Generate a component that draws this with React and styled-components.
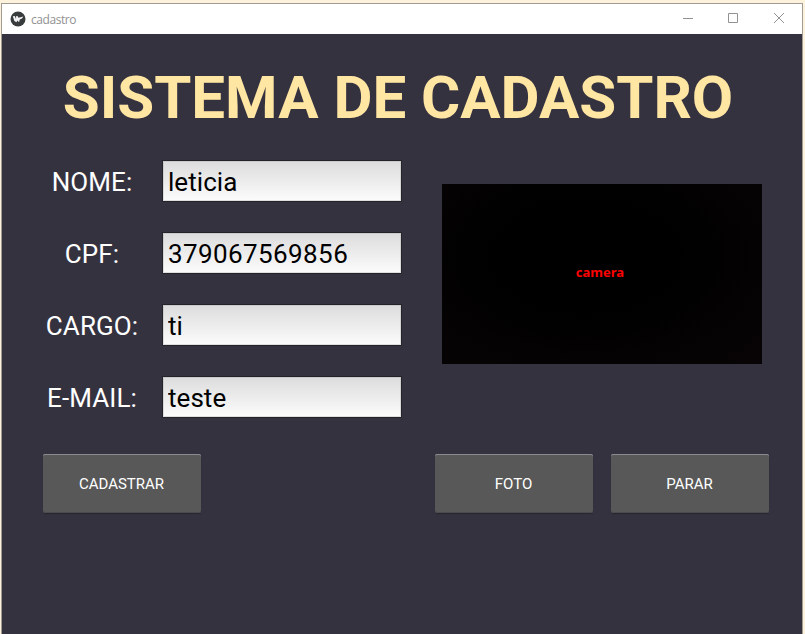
import React from "react";
import styled, { createGlobalStyle } from "styled-components";

const GlobalStyle = createGlobalStyle`
  * { box-sizing: border-box; }
  body { margin: 0; background: #fdf3dd; overflow: hidden; }
  button, input { font-family: Roboto, sans-serif; }
`;

const Desktop = styled.div`
  width: 805px;
  height: 634px;
  padding: 3px 2px 0 1px;
  overflow: hidden;
  background: #fdf3dd;
  font-family: Roboto, sans-serif;
`;

const Window = styled.main`
  height: 640px;
  border: 1px solid #a09b93;
  background: #353240;
`;

const TitleBar = styled.header`
  display: flex;
  align-items: center;
  height: 30px;
  padding-left: 8px;
  background: #fff;
`;

const WindowTitle = styled.span`
  flex: 1;
  margin-left: 5px;
  padding-top: 1px;
  color: #929292;
  font: 12px/16px "Open Sans", sans-serif;
  letter-spacing: -0.45px;
`;

const WindowButton = styled.span`
  display: flex;
  align-items: center;
  justify-content: center;
  width: 46px;
  height: 28px;
  svg { display: block; }
`;

const Heading = styled.h1`
  margin: 28px 0 0;
  padding-right: 8px;
  height: 71px;
  color: #ffe6a3;
  font-size: 60px;
  line-height: 72px;
  font-weight: 700;
  text-align: center;
  white-space: nowrap;
`;

const Content = styled.section`
  display: flex;
  gap: 40px;
  margin: 27px 0 0 40px;
`;

const Form = styled.div`
  display: flex;
  flex-direction: column;
  gap: 30px;
`;

const Field = styled.label`
  display: grid;
  grid-template-columns: 100px 240px;
  column-gap: 20px;
  align-items: center;
  height: 42px;
  color: #fff;
  font-size: 26px;
  text-align: center;
`;

const FieldName = styled.span`
  padding-top: 2px;
  letter-spacing: 0.1px;
`;

const Input = styled.input`
  width: 240px;
  height: 42px;
  padding: 2px 5px 0;
  border: 1px solid #24222b;
  border-radius: 0;
  outline: 0;
  background: linear-gradient(#dcdcdc, #fcfcfc);
  box-shadow: inset 0 0 0 1px rgba(170, 170, 170, 0.35);
  color: #000;
  font-size: 26px;
  letter-spacing: ${(p) => (p.$numeric ? "0.4px" : "0.05px")};
`;

const Camera = styled.div`
  display: flex;
  align-items: center;
  justify-content: center;
  width: 320px;
  height: 180px;
  margin-top: 24px;
  padding: 0 4px 5px 0;
  background: radial-gradient(ellipse at 45% 40%, #000 35%, #080405 100%);
  color: #f00;
  font: bold 13px/18px "Noto Sans", sans-serif;
`;

const Actions = styled.div`
  display: flex;
  margin: 36px 0 0 41px;
`;

const ActionButton = styled.button`
  width: 158px;
  height: 59px;
  margin-left: ${(p) => p.$gap || 0}px;
  padding: 0 1px 0 0;
  border: 0;
  border-radius: 2px;
  background: #585858;
  box-shadow: inset 0 1px #8b8a90, inset 0 -1px #4b4a4e, 0 1px 1px #292731;
  color: #fff;
  font-size: 15px;
`;

const fields = [
  { name: "NOME:", value: "leticia" },
  { name: "CPF:", value: "379067569856", numeric: true },
  { name: "CARGO:", value: "ti" },
  { name: "E-MAIL:", value: "teste" },
];

function AppIcon() {
  return (
    <svg width="16" height="16" viewBox="0 0 16 16">
      <circle cx="8" cy="8" r="7.5" fill="#393c3d" />
      <path d="M2.8 5.2 4.8 4.9 6 8 6.2 5 7.4 5 8.6 6.8 13.3 5.6 12 7.6 9.8 8.4 9 11.2 7.4 9.4 6.4 11.2 4.4 10Z" fill="#f4f4f4" />
    </svg>
  );
}

function Glyph({ d }) {
  return (
    <svg width="12" height="12" viewBox="0 0 12 12" fill="none" stroke="#929292">
      <path d={d} />
    </svg>
  );
}

export default function App() {
  return (
    <Desktop>
      <GlobalStyle />
      <Window>
        <TitleBar>
          <AppIcon />
          <WindowTitle>cadastro</WindowTitle>
          <WindowButton><Glyph d="M2 5.5H12" /></WindowButton>
          <WindowButton><Glyph d="M1.5 0.5H10.5V9.5H1.5Z" /></WindowButton>
          <WindowButton><Glyph d="M1 0 11 10M11 0 1 10" /></WindowButton>
        </TitleBar>
        <Heading>SISTEMA DE CADASTRO</Heading>
        <Content>
          <Form>
            {fields.map(({ name, value, numeric }) => (
              <Field key={name}>
                <FieldName>{name}</FieldName>
                <Input $numeric={numeric} defaultValue={value} spellCheck={false} />
              </Field>
            ))}
          </Form>
          <Camera>camera</Camera>
        </Content>
        <Actions>
          <ActionButton>CADASTRAR</ActionButton>
          <ActionButton $gap={234}>FOTO</ActionButton>
          <ActionButton $gap={18}>PARAR</ActionButton>
        </Actions>
      </Window>
    </Desktop>
  );
}
